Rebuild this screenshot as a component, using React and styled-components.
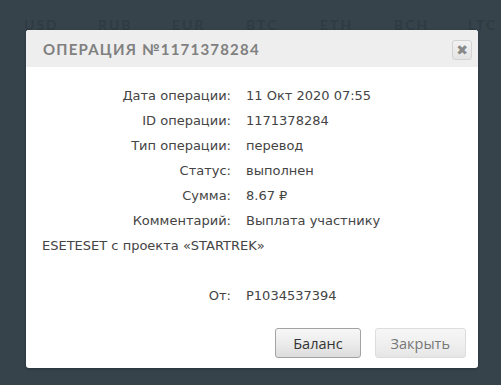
import React from 'react';
import styled, { createGlobalStyle } from 'styled-components';

const GlobalStyle = createGlobalStyle`
  html, body {
    margin: 0;
    padding: 0;
    background: #36434b;
  }
  body {
    width: 501px;
    height: 385px;
    overflow: hidden;
    font-family: "Open Sans", "Liberation Sans", sans-serif;
  }
`;

const Page = styled.div`
  position: relative;
  width: 501px;
  height: 385px;
  overflow: hidden;
  background: #36434b;
`;

const Currencies = styled.div`
  display: flex;
  overflow: hidden;
  padding: 16px 0 0 24px;
`;

const Currency = styled.span`
  width: 74px;
  flex-shrink: 0;
  font-family: "Lato", sans-serif;
  font-weight: 700;
  font-size: 14px;
  letter-spacing: 2px;
  color: #2f3b43;
`;

const Overlay = styled.div`
  position: absolute;
  left: 26px;
  top: 30px;
  width: 452px;
`;

const Dialog = styled.div`
  background: #fff;
  border-radius: 3px;
  overflow: hidden;
  box-shadow: 0 1px 3px rgba(0, 0, 0, 0.25);
`;

const Header = styled.div`
  height: 37px;
  background: #eeeeee;
  display: flex;
  align-items: center;
  justify-content: space-between;
  padding: 0 6px 0 17px;
`;

const Title = styled.div`
  font-family: "Lato", sans-serif;
  font-weight: 700;
  font-size: 15px;
  letter-spacing: 1.2px;
  color: #808080;
  text-transform: uppercase;
`;

const CloseButton = styled.button`
  width: 20px;
  height: 20px;
  margin-top: 2px;
  padding: 0;
  border: 1px solid #d3d3d3;
  border-radius: 3px;
  background: linear-gradient(#f2f2f2, #e4e4e4);
  color: #888;
  font-size: 14px;
  font-weight: 700;
  line-height: 18px;
  font-family: "DejaVu Sans", sans-serif;
  cursor: pointer;
`;

const Body = styled.div`
  padding: 16px 30px 0 16px;
  font-family: "DejaVu Sans", sans-serif;
  font-size: 13px;
  line-height: 25px;
  color: #444;
`;

const Row = styled.div`
  min-height: 25px;
`;

const Label = styled.span`
  display: inline-block;
  width: 189px;
  margin-right: 15px;
  text-align: right;
`;

const Footer = styled.div`
  display: flex;
  justify-content: flex-end;
  gap: 14px;
  padding: 20px 12px 10px;
`;

const Button = styled.button`
  height: 30px;
  padding: 0 ${(p) => (p.$muted ? '15px' : '17px')};
  border-radius: 3px;
  border: 1px solid ${(p) => (p.$muted ? '#dddddd' : '#a3a3a3')};
  background: ${(p) =>
    p.$muted
      ? 'linear-gradient(#f6f6f6, #f0f0f0 50%, #e6e6e6)'
      : 'linear-gradient(#f7f7f7, #ececec 50%, #dcdcdc)'};
  color: ${(p) => (p.$muted ? '#777' : '#333')};
  font-family: "Open Sans", sans-serif;
  font-size: 14.5px;
  cursor: pointer;
`;

const rows = [
  ['Дата операции:', '11 Окт 2020 07:55'],
  ['ID операции:', '1171378284'],
  ['Тип операции:', 'перевод'],
  ['Статус:', 'выполнен'],
  ['Сумма:', '8.67 ₽'],
  ['Комментарий:', 'Выплата участнику ESETESET с проекта «STARTREK»'],
];

const App = () => {
  return (
    <Page>
      <GlobalStyle />
      <Currencies>
        {['USD', 'RUB', 'EUR', 'BTC', 'ETH', 'BCH', 'LTC'].map((c) => (
          <Currency key={c}>{c}</Currency>
        ))}
      </Currencies>
      <Overlay>
        <Dialog>
          <Header>
            <Title>Операция №1171378284</Title>
            <CloseButton>✖</CloseButton>
          </Header>
          <Body>
            {rows.map(([label, value]) => (
              <Row key={label}>
                <Label>{label}</Label>
                {value}
              </Row>
            ))}
            <Row />
            <Row>
              <Label>От:</Label>
              P1034537394
            </Row>
          </Body>
          <Footer>
            <Button>Баланс</Button>
            <Button $muted>Закрыть</Button>
          </Footer>
        </Dialog>
      </Overlay>
    </Page>
  );
};

export default App;
